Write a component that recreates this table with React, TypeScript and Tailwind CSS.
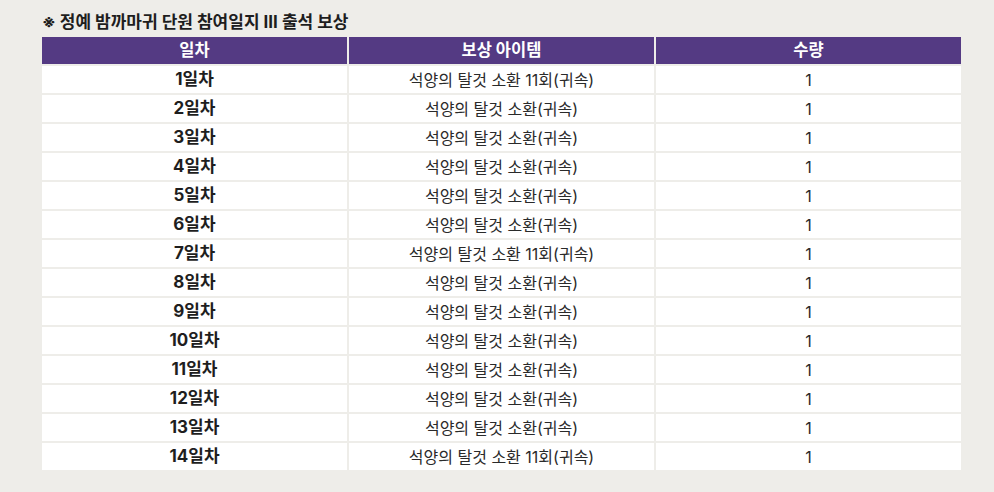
import React from "react";

const rows = [
  { day: "1일차", item: "석양의 탈것 소환 11회(귀속)", qty: 1 },
  { day: "2일차", item: "석양의 탈것 소환(귀속)", qty: 1 },
  { day: "3일차", item: "석양의 탈것 소환(귀속)", qty: 1 },
  { day: "4일차", item: "석양의 탈것 소환(귀속)", qty: 1 },
  { day: "5일차", item: "석양의 탈것 소환(귀속)", qty: 1 },
  { day: "6일차", item: "석양의 탈것 소환(귀속)", qty: 1 },
  { day: "7일차", item: "석양의 탈것 소환 11회(귀속)", qty: 1 },
  { day: "8일차", item: "석양의 탈것 소환(귀속)", qty: 1 },
  { day: "9일차", item: "석양의 탈것 소환(귀속)", qty: 1 },
  { day: "10일차", item: "석양의 탈것 소환(귀속)", qty: 1 },
  { day: "11일차", item: "석양의 탈것 소환(귀속)", qty: 1 },
  { day: "12일차", item: "석양의 탈것 소환(귀속)", qty: 1 },
  { day: "13일차", item: "석양의 탈것 소환(귀속)", qty: 1 },
  { day: "14일차", item: "석양의 탈것 소환 11회(귀속)", qty: 1 },
];

const App = () => {
  return (
    <div
      className="h-[492px] w-full bg-[#eeede9] pl-[42px] pt-[12px]"
      style={{ fontFamily: 'Inter, "Noto Sans CJK KR", sans-serif' }}
    >
      <h2 className="h-[25px] text-[17px] leading-[20px] font-bold text-[#1e1e1e]">
        ※ 정예 밤까마귀 단원 참여일지 III 출석 보상
      </h2>

      <div className="grid w-[919px] grid-cols-3 gap-[2px]">
        <div className="flex h-[27px] items-center justify-center bg-[#543a83] text-[16.5px] font-bold text-white">
          일차
        </div>
        <div className="flex h-[27px] items-center justify-center bg-[#543a83] text-[16.5px] font-bold text-white">
          보상 아이템
        </div>
        <div className="flex h-[27px] items-center justify-center bg-[#543a83] text-[16.5px] font-bold text-white">
          수량
        </div>

        {rows.map((r) => (
          <React.Fragment key={r.day}>
            <div className="flex h-[27px] items-center justify-center bg-white text-[17px] font-bold text-[#1e1e1e]">
              {r.day}
            </div>
            <div className="flex h-[27px] items-center justify-center bg-white text-[16px] text-[#2a2a2a]">
              {r.item}
            </div>
            <div className="flex h-[27px] items-center justify-center bg-white text-[16px] text-[#2a2a2a]">
              {r.qty}
            </div>
          </React.Fragment>
        ))}
      </div>
    </div>
  );
};

export default App;
